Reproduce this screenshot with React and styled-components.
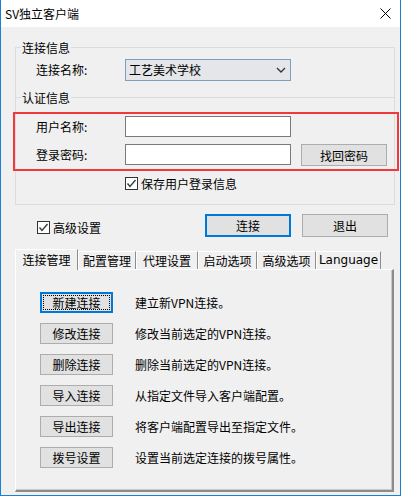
import React from "react";
import styled, { createGlobalStyle, css } from "styled-components";

const GlobalStyle = createGlobalStyle`
  html, body { margin: 0; padding: 0; background: #ffffff; }
  body {
    font-family: "Noto Sans CJK SC", "Noto Sans", sans-serif;
    font-size: 12px;
    color: #000;
  }
  * { box-sizing: border-box; }
`;

const Window = styled.div`
  width: 401px;
  height: 496px;
  border: 1px solid #1b7fd5;
  border-top: none;
  display: flex;
  flex-direction: column;
  background: #f0f0f0;
`;

const TitleBar = styled.div`
  height: 27px;
  flex: none;
  background: #ffffff;
  display: flex;
  align-items: center;
  justify-content: space-between;
  padding: 0 9px 0 4px;
`;

const Title = styled.span`
  font-size: 12px;
  line-height: 17px;
`;

const Client = styled.div`
  flex: 1;
  display: flex;
  flex-direction: column;
`;

const Group = styled.div`
  position: relative;
  margin: ${(p) => p.$mt}px 5px 0 14px;
  height: ${(p) => p.$h}px;
  border: 1px solid #dcdcdc;
  ${(p) => p.$open && css`border-bottom: none;`}
`;

const Legend = styled.span`
  position: absolute;
  top: -9px;
  left: 5px;
  padding: 0 1px;
  background: #f0f0f0;
  line-height: 17px;
`;

const FieldGrid = styled.div`
  display: grid;
  grid-template-columns: 89px 166px auto;
  column-gap: 0;
  row-gap: 7px;
  align-items: start;
  padding-left: ${(p) => p.$pl}px;
  padding-top: ${(p) => p.$pt || 0}px;
`;

const Label = styled.span`
  line-height: ${(p) => p.$lh || 21}px;
  white-space: nowrap;
  grid-column: 1;
`;

const Select = styled.div`
  width: 166px;
  height: 22px;
  border: 1px solid #7f9dbd;
  background: #e4e6e9;
  display: flex;
  align-items: center;
  justify-content: space-between;
  padding: 0 4px 0 3px;
  line-height: 20px;
`;

const TextInput = styled.div`
  width: 166px;
  height: 21px;
  border: 1px solid #7a7a7a;
  background: #ffffff;
`;

const Highlight = styled.div`
  margin: 14px -5px 0 -3px;
  border: 2px solid #f0393c;
  padding: 2px 0 3px 0;
`;

const Button = styled.div`
  position: relative;
  width: ${(p) => p.$w}px;
  height: ${(p) => p.$h}px;
  margin-left: ${(p) => p.$ml || 0}px;
  background: #e1e1e1;
  border: 1px solid #adadad;
  display: flex;
  align-items: center;
  justify-content: center;
  line-height: 17px;
  white-space: nowrap;
  ${(p) =>
    p.$default &&
    css`
      border: 2px solid #0078d7;
    `}
  ${(p) =>
    p.$focus &&
    css`
      border: 2px solid #0078d7;
      &::after {
        content: "";
        position: absolute;
        inset: 1px;
        border: 1px dotted #000;
      }
    `}
`;

const CheckRow = styled.label`
  display: flex;
  align-items: center;
  gap: 3px;
  line-height: 17px;
  padding-left: ${(p) => p.$pl}px;
  margin-top: ${(p) => p.$mt || 0}px;
`;

const Box = styled.span`
  width: 13px;
  height: 13px;
  border: 1px solid #333;
  background: #fff;
  display: flex;
  align-items: center;
  justify-content: center;
  flex: none;
`;

const ActionRow = styled.div`
  display: flex;
  align-items: center;
  margin-top: 9px;
  padding: 0 12px 0 36px;
  gap: 11px;
`;

const Spacer = styled.div`
  flex: 1;
`;

const TabStrip = styled.div`
  display: flex;
  align-items: flex-end;
  height: 20px;
  margin: 12px 0 0 14px;
  position: relative;
  z-index: 1;
`;

const Tab = styled.div`
  width: ${(p) => p.$w}px;
  height: ${(p) => (p.$active ? 21 : 18)}px;
  margin-bottom: ${(p) => (p.$active ? -1 : 0)}px;
  background: #f0f0f0;
  border-top: 1px solid #ffffff;
  border-left: 1px solid #ffffff;
  border-right: 1px solid #8c8c8c;
  display: flex;
  align-items: ${(p) => (p.$active ? "flex-start" : "center")};
  justify-content: center;
  padding-top: ${(p) => (p.$active ? 1 : 0)}px;
  line-height: 17px;
  white-space: nowrap;
  font-family: ${(p) =>
    p.$latin ? '"DejaVu Sans", sans-serif' : '"Noto Sans CJK SC", sans-serif'};
`;

const Panel = styled.div`
  margin: 0 6px 0 14px;
  width: 379px;
  height: 223px;
  border-top: 1px solid #ffffff;
  border-left: 1px solid #ffffff;
  border-right: 2px solid #8c8c8c;
  border-bottom: 2px solid #8c8c8c;
  box-shadow: inset -1px -1px 0 #c8c8c8;
  padding: 22px 0 0 24px;
  display: flex;
  flex-direction: column;
  gap: 10px;
`;

const ActionItem = styled.div`
  display: grid;
  grid-template-columns: 73px 1fr;
  column-gap: 22px;
  align-items: center;
`;

const Desc = styled.span`
  line-height: 17px;
  white-space: nowrap;
`;

const CloseIcon = () => (
  <svg width="11" height="11" viewBox="0 0 11 11">
    <path d="M0.5 0.5 L10.5 10.5 M10.5 0.5 L0.5 10.5" stroke="#000" strokeWidth="1" />
  </svg>
);

const Chevron = () => (
  <svg width="10" height="6" viewBox="0 0 10 6">
    <polyline points="1,1 5,5 9,1" fill="none" stroke="#333" strokeWidth="1.3" />
  </svg>
);

const Check = () => (
  <svg width="11" height="11" viewBox="0 0 11 11">
    <polyline points="1.5,5.5 4,8.5 9.5,2" fill="none" stroke="#3a3a3a" strokeWidth="1.4" />
  </svg>
);

const tabs = [
  { label: "连接管理", w: 63, active: true },
  { label: "配置管理", w: 58 },
  { label: "代理设置", w: 62 },
  { label: "启动选项", w: 59 },
  { label: "高级选项", w: 59 },
  { label: "Language", w: 65, latin: true },
];

const actions = [
  { btn: "新建连接", desc: "建立新VPN连接。", focus: true },
  { btn: "修改连接", desc: "修改当前选定的VPN连接。" },
  { btn: "删除连接", desc: "删除当前选定的VPN连接。" },
  { btn: "导入连接", desc: "从指定文件导入客户端配置。" },
  { btn: "导出连接", desc: "将客户端配置导出至指定文件。" },
  { btn: "拨号设置", desc: "设置当前选定连接的拨号属性。" },
];

export default function App() {
  return (
    <>
      <GlobalStyle />
      <Window>
        <TitleBar>
          <Title>SV独立客户端</Title>
          <CloseIcon />
        </TitleBar>
        <Client>
          <Group $mt={20} $h={50} $open>
            <Legend>连接信息</Legend>
            <FieldGrid $pl={20} $pt={11}>
              <Label $lh={22}>连接名称:</Label>
              <Select>
                <span>工艺美术学校</span>
                <Chevron />
              </Select>
            </FieldGrid>
          </Group>
          <Group $mt={0} $h={108}>
            <Legend>认证信息</Legend>
            <Highlight>
              <FieldGrid $pl={21}>
                <Label>用户名称:</Label>
                <TextInput />
                <span />
                <Label>登录密码:</Label>
                <TextInput />
                <Button $w={86} $h={22} $ml={10}>找回密码</Button>
              </FieldGrid>
            </Highlight>
            <CheckRow $pl={109} $mt={4}>
              <Box>
                <Check />
              </Box>
              保存用户登录信息
            </CheckRow>
          </Group>
          <ActionRow>
            <CheckRow $pl={0} $mt={3}>
              <Box>
                <Check />
              </Box>
              高级设置
            </CheckRow>
            <Spacer />
            <Button $w={86} $h={23} $default>连接</Button>
            <Button $w={86} $h={23}>退出</Button>
          </ActionRow>
          <TabStrip>
            {tabs.map((t) => (
              <Tab key={t.label} $w={t.w} $active={t.active} $latin={t.latin}>
                {t.label}
              </Tab>
            ))}
          </TabStrip>
          <Panel>
            {actions.map((a) => (
              <ActionItem key={a.btn}>
                <Button $w={73} $h={21} $focus={a.focus}>{a.btn}</Button>
                <Desc>{a.desc}</Desc>
              </ActionItem>
            ))}
          </Panel>
        </Client>
      </Window>
    </>
  );
}
